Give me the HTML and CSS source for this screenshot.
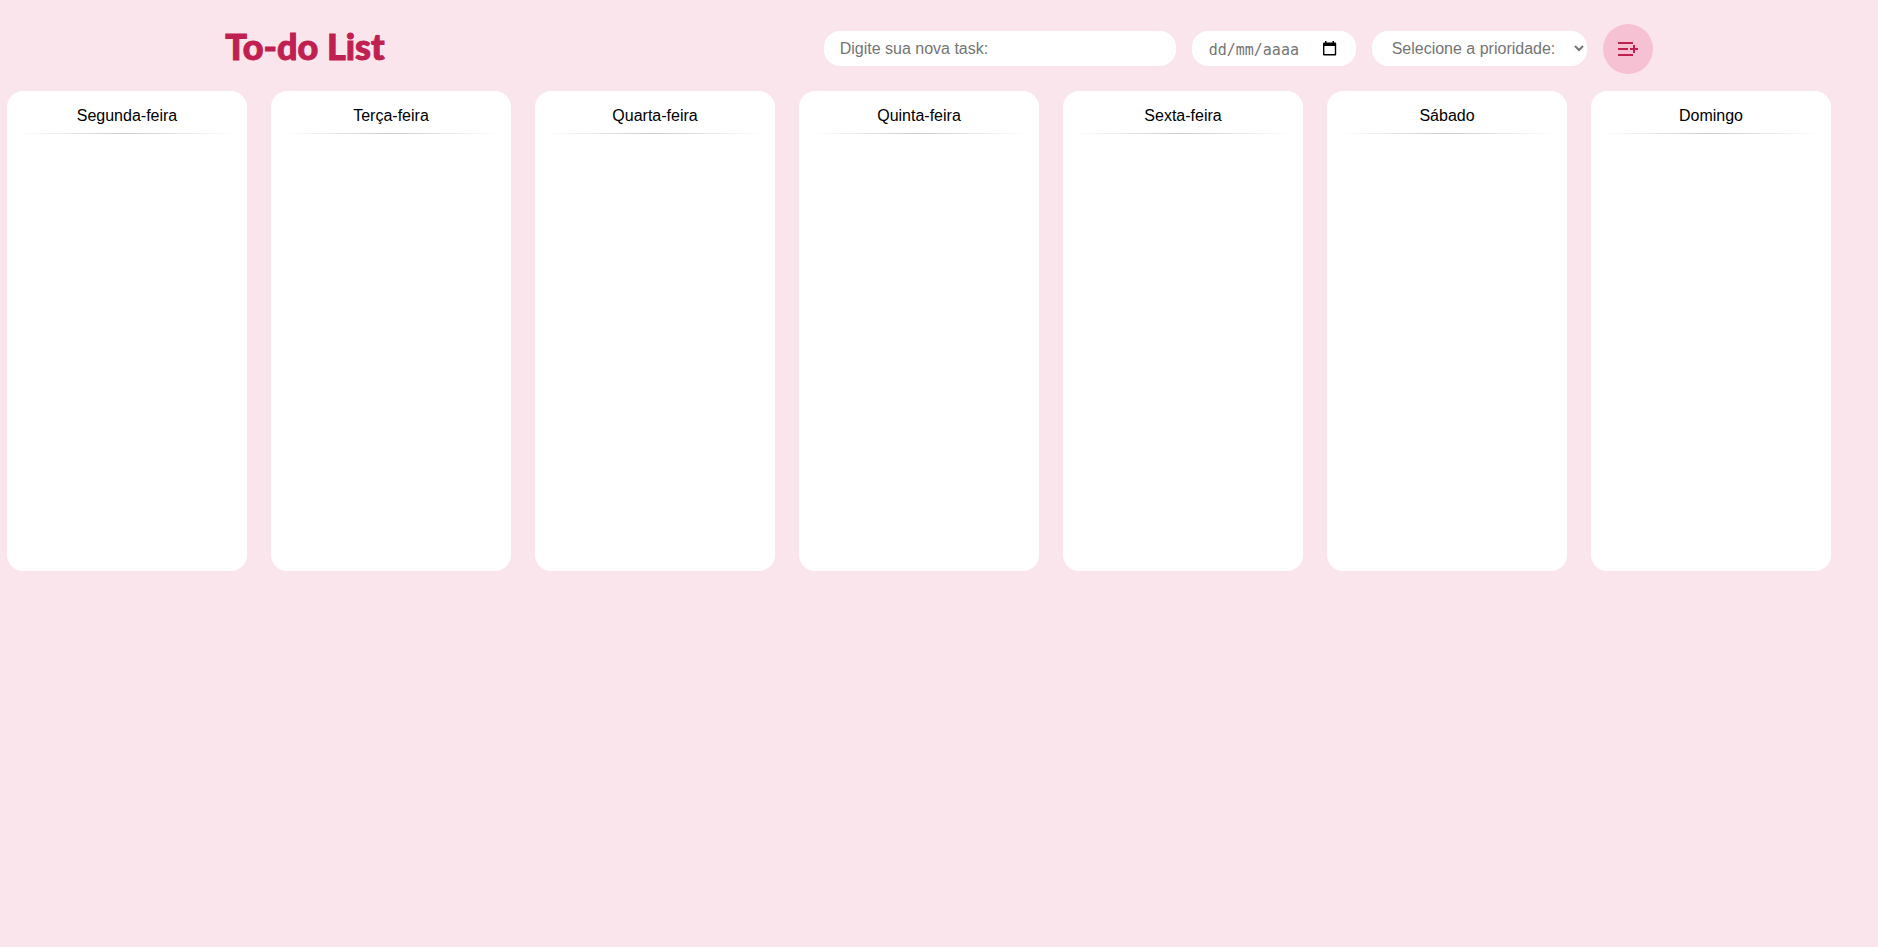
FILE: index.html
```html
<!DOCTYPE html>
<html lang="pt-BR">
<head>
  <meta charset="UTF-8">
  <meta name="viewport" content="width=device-width, initial-scale=1">
  <title>To-do List</title>
  <link rel="stylesheet" href="styles.css">
</head>
<body>
  <header class="header">
    <h1 class="title">To-do List</h1>
    <form class="task-form">
      <input class="field task-input" type="text" placeholder="Digite sua nova task:" aria-label="Nova task">
      <div class="field date-field">
        <input class="date-input" type="text" placeholder="dd/mm/aaaa" aria-label="Data">
        <button class="date-button" type="button" aria-label="Abrir calendário">
          <svg width="14" height="15" viewBox="0 0 14 15" aria-hidden="true"><path fill="#000" fill-rule="evenodd" d="M2 0h1.5v1.5h6V0H11v1.5h1.2a1 1 0 0 1 1 1v11a1 1 0 0 1-1 1H1a1 1 0 0 1-1-1v-11a1 1 0 0 1 1-1h1zM1.4 5v8.1h10.4V5z"/></svg>
        </button>
      </div>
      <select class="field priority-select" aria-label="Prioridade">
        <option>Selecione a prioridade:</option>
        <option>Alta</option>
        <option>Média</option>
        <option>Baixa</option>
      </select>
      <button class="add-button" type="submit" aria-label="Adicionar task">
        <svg width="20" height="14" viewBox="0 0 20 14" aria-hidden="true"><path fill="#c01f52" d="M0 0h15v2H0zM0 6h10v2H0zM0 12h15v2H0zM12 6h3V3h2v3h3v2h-3v3h-2V8h-3z"/></svg>
      </button>
    </form>
  </header>
  <main class="board">
    <section class="day"><h2 class="day-name">Segunda-feira</h2><hr class="divider"></section>
    <section class="day"><h2 class="day-name">Terça-feira</h2><hr class="divider"></section>
    <section class="day"><h2 class="day-name">Quarta-feira</h2><hr class="divider"></section>
    <section class="day"><h2 class="day-name">Quinta-feira</h2><hr class="divider"></section>
    <section class="day"><h2 class="day-name">Sexta-feira</h2><hr class="divider"></section>
    <section class="day"><h2 class="day-name">Sábado</h2><hr class="divider"></section>
    <section class="day"><h2 class="day-name">Domingo</h2><hr class="divider"></section>
  </main>
</body>
</html>
```

FILE: styles.css
```css
* {
  box-sizing: border-box;
  margin: 0;
  padding: 0;
}

body {
  background: #fbe5ec;
  color: #000;
  font-family: "Liberation Sans", Arial, sans-serif;
  font-size: 16px;
}

.header {
  display: flex;
  align-items: center;
  justify-content: space-between;
  padding: 24px 12% 17px;
}

.title {
  padding-bottom: 6px;
  color: #c01f52;
  font-family: Lato, sans-serif;
  font-size: 36px;
  font-weight: 900;
  line-height: 44px;
  -webkit-text-stroke: 1px #c01f52;
}

.task-form {
  display: flex;
  align-items: center;
  gap: 16px;
}

.field {
  height: 35px;
  margin-bottom: 1px;
  border: none;
  border-radius: 16px;
  background: #fff;
  color: #757575;
  font-family: inherit;
  font-size: 16px;
}

.field::placeholder,
.date-input::placeholder {
  color: #757575;
}

.task-input {
  width: 352px;
  padding: 0 16px;
}

.date-field {
  display: flex;
  align-items: center;
  justify-content: space-between;
  width: 164px;
  padding: 0 19px 0 17px;
}

.date-input {
  width: 100px;
  padding-top: 2px;
  border: none;
  background: none;
  color: #757575;
  font-family: "DejaVu Sans Mono", monospace;
  font-size: 15px;
}

.date-button {
  display: flex;
  border: none;
  background: none;
}

.priority-select {
  width: 215px;
  padding-left: 16px;
}

.add-button {
  display: flex;
  align-items: center;
  justify-content: center;
  width: 50px;
  height: 50px;
  border: none;
  border-radius: 50%;
  background: #f5c1d3;
}

.board {
  display: flex;
  gap: 24px;
  padding-left: 7px;
}

.day {
  flex: none;
  width: 240px;
  min-height: 480px;
  padding: 16px 12px;
  border-radius: 16px;
  background: #fff;
}

.day-name {
  font-size: 16px;
  font-weight: 400;
  line-height: 18px;
  text-align: center;
}

.divider {
  height: 1px;
  margin-top: 8px;
  border: none;
  background: linear-gradient(to right, transparent, #ccc, transparent);
}
```
